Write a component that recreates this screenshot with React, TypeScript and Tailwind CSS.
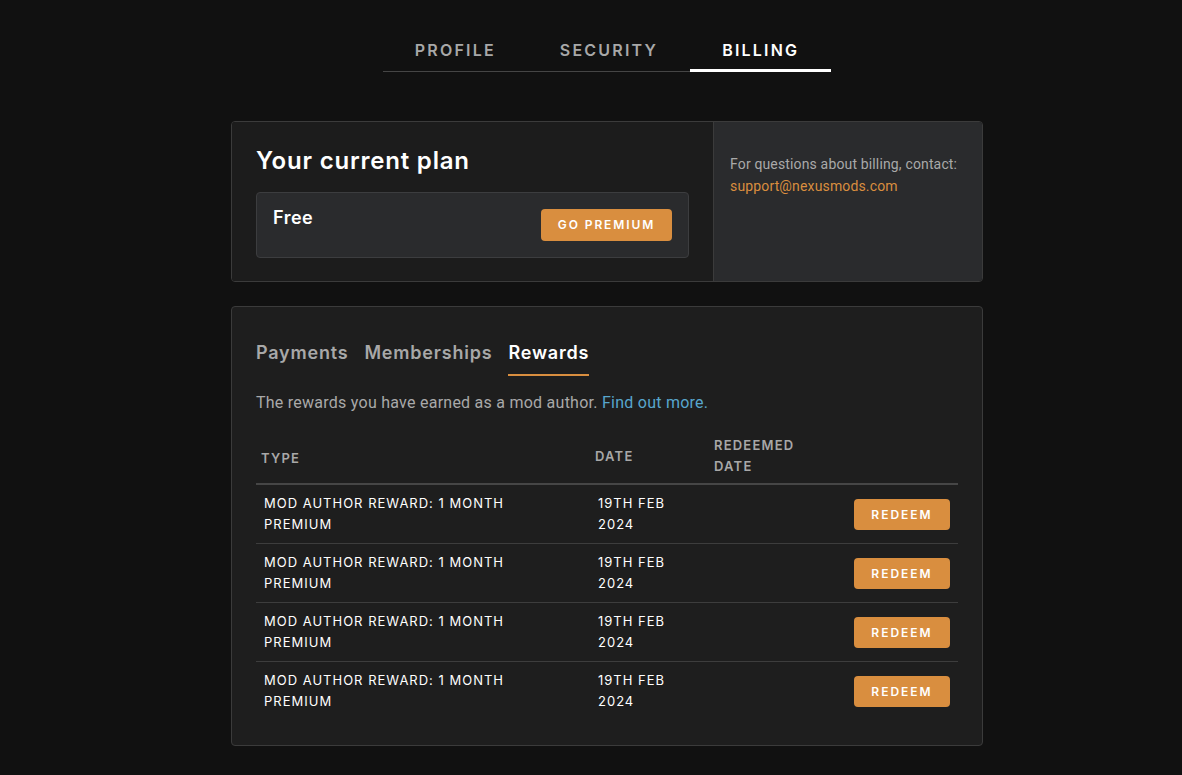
import { useState } from 'react';

const heading = { fontFamily: 'Inter, "DejaVu Sans", sans-serif' };
const body = { fontFamily: 'Roboto, "Liberation Sans", sans-serif' };

type TopTab = 'profile' | 'security' | 'billing';
type SubTab = 'payments' | 'memberships' | 'rewards';

const rewards = [
  { id: 1, type: 'MOD AUTHOR REWARD: 1 MONTH PREMIUM', date: '19TH FEB 2024' },
  { id: 2, type: 'MOD AUTHOR REWARD: 1 MONTH PREMIUM', date: '19TH FEB 2024' },
  { id: 3, type: 'MOD AUTHOR REWARD: 1 MONTH PREMIUM', date: '19TH FEB 2024' },
  { id: 4, type: 'MOD AUTHOR REWARD: 1 MONTH PREMIUM', date: '19TH FEB 2024' },
];

function App() {
  const [tab, setTab] = useState<TopTab>('billing');
  const [sub, setSub] = useState<SubTab>('rewards');

  return (
    <div className="min-h-screen bg-[#111111] pb-8 pl-[32px] pt-[33px]" style={heading}>
      <nav className="mx-auto flex w-fit border-b border-[#454545]">
        {(['profile', 'security', 'billing'] as TopTab[]).map((t) => (
          <button
            key={t}
            onClick={() => setTab(t)}
            className={`-mb-px h-[39px] border-b-[3px] px-[32px] pb-[3px] text-[16px] font-semibold uppercase tracking-[2.2px] ${
              tab === t ? 'border-white text-white' : 'border-transparent text-[#a8a8a8]'
            }`}
          >
            {t}
          </button>
        ))}
      </nav>

      <div className="mx-auto mt-[49px] w-[752px]">
        <section className="flex h-[161px] overflow-hidden rounded border border-[#3b3b3b]">
          <div className="w-[481px] bg-[#1c1c1c] px-6 pt-[24px]">
            <h2 className="text-[24px] font-semibold leading-[30px] tracking-[0.8px] text-white">Your current plan</h2>
            <div className="mt-[16px] flex h-[66px] items-start justify-between rounded border border-[#3c3d3f] bg-[#2a2b2d] pl-4 pr-4 pt-[13px]">
              <span className="text-[18px] font-semibold leading-[24px] tracking-[0.5px] text-white">Free</span>
              <button className="mt-[3px] h-[32px] w-[131px] rounded bg-[#d98e3f] text-[12px] font-semibold uppercase tracking-[1.9px] text-white">
                Go Premium
              </button>
            </div>
          </div>
          <div className="flex-1 border-l border-[#3b3b3b] bg-[#2a2b2d] px-4 pt-[31px] text-[14px] leading-[22px] tracking-[0.15px] text-[#a9a9a9]" style={body}>
            <p>For questions about billing, contact:</p>
            <a href="#" className="text-[#d98e3f]">support@nexusmods.com</a>
          </div>
        </section>

        <section className="mt-6 rounded border border-[#3b3b3b] bg-[#1e1e1e] px-6 pb-6 pt-[30px]">
          <div className="flex gap-4">
            {(['payments', 'memberships', 'rewards'] as SubTab[]).map((s) => (
              <button
                key={s}
                onClick={() => setSub(s)}
                className={`h-[39px] border-b-2 pb-[7px] text-[18px] font-semibold capitalize tracking-[0.8px] ${
                  sub === s ? 'border-[#d98e3f] text-white' : 'border-transparent text-[#a8a8a8]'
                }`}
              >
                {s}
              </button>
            ))}
          </div>

          <p className="mt-[17px] text-[16px] leading-[20px] tracking-[0.25px] text-[#a9a9a9]" style={body}>
            The rewards you have earned as a mod author.{' '}
            <a href="#" className="text-[#58a6cd]">Find out more.</a>
          </p>

          <table className="mt-[22px] w-full table-fixed border-collapse">
            <thead>
              <tr className="border-b-2 border-[#464646] text-left text-[13px] font-semibold uppercase leading-[21px] tracking-[1.2px] text-[#a8a8a8]">
                <th className="w-[334px] px-[5px] pb-[6px] pt-[4px] font-semibold">Type</th>
                <th className="w-[119px] px-[5px] pb-[6px] font-semibold">Date</th>
                <th className="w-[110px] px-[5px] pb-[6px] font-semibold">Redeemed date</th>
                <th className="pb-[6px]"></th>
              </tr>
            </thead>
            <tbody>
              {rewards.map((r, i) => (
                <tr
                  key={r.id}
                  className={`h-[59px] text-[13px] font-normal uppercase leading-[21px] tracking-[1px] text-white ${
                    i < rewards.length - 1 ? 'border-b border-[#3d3d3d]' : ''
                  }`}
                >
                  <td className="px-2 py-2">
                    <span className="block max-w-[270px]">{r.type}</span>
                  </td>
                  <td className="px-2 py-2 pr-8">{r.date}</td>
                  <td className="px-2 py-2"></td>
                  <td className="py-2 pr-2 text-right">
                    <button className="h-[31px] w-[96px] rounded bg-[#d98e3f] text-[12px] font-semibold uppercase tracking-[2px] text-white">
                      Redeem
                    </button>
                  </td>
                </tr>
              ))}
            </tbody>
          </table>
        </section>
      </div>
    </div>
  );
}

export default App;
